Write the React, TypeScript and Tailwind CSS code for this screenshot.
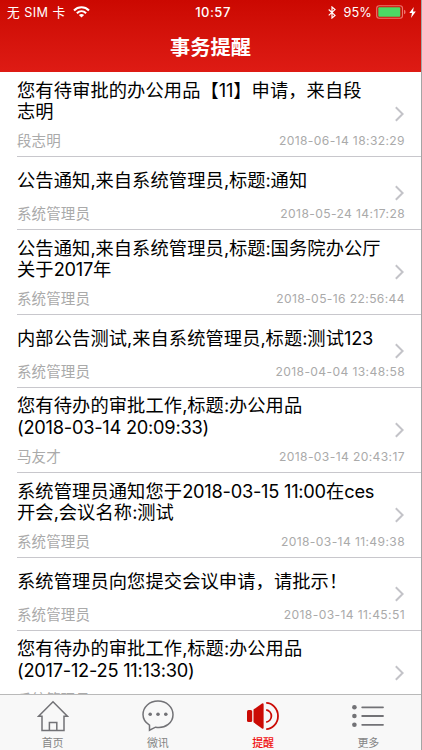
import React from "react";

type Item = { lines: string[]; from: string; time: string };

const items: Item[] = [
  { lines: ["您有待审批的办公用品【11】申请，来自段", "志明"], from: "段志明", time: "2018-06-14 18:32:29" },
  { lines: ["公告通知,来自系统管理员,标题:通知"], from: "系统管理员", time: "2018-05-24 14:17:28" },
  { lines: ["公告通知,来自系统管理员,标题:国务院办公厅", "关于2017年"], from: "系统管理员", time: "2018-05-16 22:56:44" },
  { lines: ["内部公告测试,来自系统管理员,标题:测试123"], from: "系统管理员", time: "2018-04-04 13:48:58" },
  { lines: ["您有待办的审批工作,标题:办公用品", "(2018-03-14 20:09:33)"], from: "马友才", time: "2018-03-14 20:43:17" },
  { lines: ["系统管理员通知您于2018-03-15 11:00在ces", "开会,会议名称:测试"], from: "系统管理员", time: "2018-03-14 11:49:38" },
  { lines: ["系统管理员向您提交会议申请，请批示！"], from: "系统管理员", time: "2018-03-14 11:45:51" },
  { lines: ["您有待办的审批工作,标题:办公用品", "(2017-12-25 11:13:30)"], from: "系统管理员", time: "2017-12-25 11:13:30" },
];

// Latin runs are set slightly tighter than the Chinese text around them.
function Mixed({ text }: { text: string }) {
  return (
    <>
      {text.split(/([\x20-\x7e]+)/).map((part, i) =>
        i % 2 ? (
          <span key={i} className="tracking-[-0.25px]">
            {part}
          </span>
        ) : (
          part
        ),
      )}
    </>
  );
}

function Row({ item }: { item: Item }) {
  const double = item.lines.length > 1;
  return (
    <li className={`ml-[17px] flex shrink-0 flex-col border-b border-[#c8c7cc] ${double ? "h-[85.1px] pt-[7.6px]" : "h-[72.7px] pt-[12.6px]"}`}>
      <div className="relative">
        {item.lines.map((line) => (
          <p key={line} className="h-[21.6px] whitespace-nowrap text-[18.25px] leading-[21.6px] tracking-[0.1px] text-black">
            <Mixed text={line} />
          </p>
        ))}
        <svg className={`absolute right-[17px] ${double ? "top-[26.4px]" : "top-[15.4px]"}`} width="9" height="16" viewBox="0 0 9 16" fill="none" stroke="#c3c3c8" strokeWidth="2">
          <path d="M0.8 1.3 7.6 8 0.8 14.7" />
        </svg>
      </div>
      <div className={`flex h-4 items-center justify-between pr-[16px] text-[#aaaaaa] ${double ? "mt-[10px]" : "mt-[14.5px]"}`}>
        <span className="text-[14.5px] leading-4 tracking-[0.1px]">{item.from}</span>
        <span className="text-[12.1px] leading-4 tracking-[0.38px]">{item.time}</span>
      </div>
    </li>
  );
}

function HomeIcon() {
  return (
    <svg width="32" height="32" viewBox="0 0 32 32" fill="none" stroke="#727276" strokeWidth="1.5">
      <path d="M5 16.2H1.6L16 1.8 30.4 16.2H27V30.4H5Z" />
      <path d="M12.4 30.4V22.5H19.8V30.4" />
    </svg>
  );
}

function ChatIcon() {
  return (
    <svg width="32" height="32" viewBox="0 0 32 32" fill="none" stroke="#727276" strokeWidth="1.5">
      <path d="M7.5 25.1V30.2L13.5 27.2C24 28.9 31 22.3 31 14.8 31 7 24.5 1 16 1S1 7 1 14.6C1 19 3.5 22.8 7.5 25.1Z" />
      <g fill="#727276" stroke="none">
        <circle cx="8.2" cy="14.3" r="1.8" />
        <circle cx="16" cy="14.3" r="1.8" />
        <circle cx="23.8" cy="14.3" r="1.8" />
      </g>
    </svg>
  );
}

function SpeakerIcon() {
  return (
    <svg width="34" height="32" viewBox="0 0 34 32" fill="#cb0b05">
      <rect x="1" y="10" width="5.2" height="12" rx="1.5" />
      <path d="M7.5 9.5 16 3.4Q17.6 2.6 17.6 4.5V27.5Q17.6 29.4 16 28.5L7.5 22.3Z" />
      <g fill="none" stroke="#cb0b05" strokeWidth="1.8">
        <path d="M20.2 9.8A6.3 6.3 0 0 1 20.2 22.2" />
        <path d="M20.2 2.8C26 2.8 32 8.3 32 16S26 29.2 20.2 29.2" />
      </g>
    </svg>
  );
}

function MoreIcon() {
  return (
    <svg width="32" height="32" viewBox="0 0 32 32" fill="#727276" stroke="#727276" strokeWidth="1.8" strokeLinecap="round">
      {[7.3, 16, 24.8].map((y) => (
        <g key={y}>
          <circle cx="2.4" cy={y} r="2.3" stroke="none" />
          <path d={`M10.2 ${y}H31`} />
        </g>
      ))}
    </svg>
  );
}

const tabs = [
  { label: "首页", icon: <HomeIcon />, active: false },
  { label: "微讯", icon: <ChatIcon />, active: false },
  { label: "提醒", icon: <SpeakerIcon />, active: true },
  { label: "更多", icon: <MoreIcon />, active: false },
];

export default function App() {
  return (
    <div className="flex h-[750px] w-[422px] flex-col overflow-hidden border-r border-[#a5a5a5] bg-white font-[Inter,'Noto_Sans_CJK_SC',sans-serif]">
      <header className="h-[72.3px] shrink-0 bg-linear-to-b from-[#cb0801] to-[#de1b14] text-white">
        <div className="grid h-6 grid-cols-3 items-center pt-px pr-[5px] pl-[7px] text-[12.7px]">
          <div className="flex items-center gap-[7px] tracking-[0.45px] whitespace-nowrap">
            <span>无 SIM 卡</span>
            <svg width="17" height="12" viewBox="0 0 17 12" fill="none" stroke="white" strokeWidth="2.1">
              <path d="M1 4.4C5.2 0.2 11.8 0.2 16 4.4" />
              <path d="M3.9 7.2C6.6 4.6 10.4 4.6 13.1 7.2" />
              <path d="M8.5 11.6 5.9 9C7.3 7.8 9.7 7.8 11.1 9Z" fill="white" stroke="none" />
            </svg>
          </div>
          <div className="pl-[3px] text-center text-[13px] font-medium tracking-[0.5px]">10:57</div>
          <div className="flex items-center justify-end">
            <svg className="mr-[7px]" width="8" height="13" viewBox="0 0 8 13" fill="none" stroke="white" strokeWidth="1.2">
              <path d="M0.7 3.5 7 9.4 4 12V1L7 3.6 0.7 9.4" />
            </svg>
            <span className="mr-[4px] tracking-[0.15px]">95%</span>
            <svg width="30" height="14" viewBox="0 0 30 14">
              <rect x="0.7" y="0.7" width="25.8" height="12.6" rx="2.5" fill="none" stroke="#ee766f" strokeWidth="1.1" />
              <rect x="2.3" y="2.3" width="22" height="9.4" rx="1" fill="#4cd964" />
              <path d="M28 4.8Q29.6 5.2 29.6 7T28 9.2Z" fill="#ee766f" />
            </svg>
            <svg className="ml-[3px]" width="7" height="11" viewBox="0 0 7 11" fill="white">
              <path d="M4.8 0 0.3 6H3L2 11 6.8 4.5H4Z" />
            </svg>
          </div>
        </div>
        <h1 className="h-[47px] text-center text-[20.2px] leading-[47px] font-bold">事务提醒</h1>
      </header>
      <ul className="flex min-h-0 flex-1 flex-col overflow-hidden">
        {items.map((item) => (
          <Row key={item.lines.join("")} item={item} />
        ))}
      </ul>
      <nav className="grid h-[56px] shrink-0 grid-cols-4 border-t border-[#b9b9b9] bg-[#f8f8f8]">
        {tabs.map((tab) => (
          <div key={tab.label} className="flex flex-col items-center pt-[5px]">
            {tab.icon}
            <span className={`mt-[2.5px] text-[11px] leading-4 ${tab.active ? "font-medium text-[#f01010]" : "text-[#858585]"}`}>{tab.label}</span>
          </div>
        ))}
      </nav>
    </div>
  );
}
